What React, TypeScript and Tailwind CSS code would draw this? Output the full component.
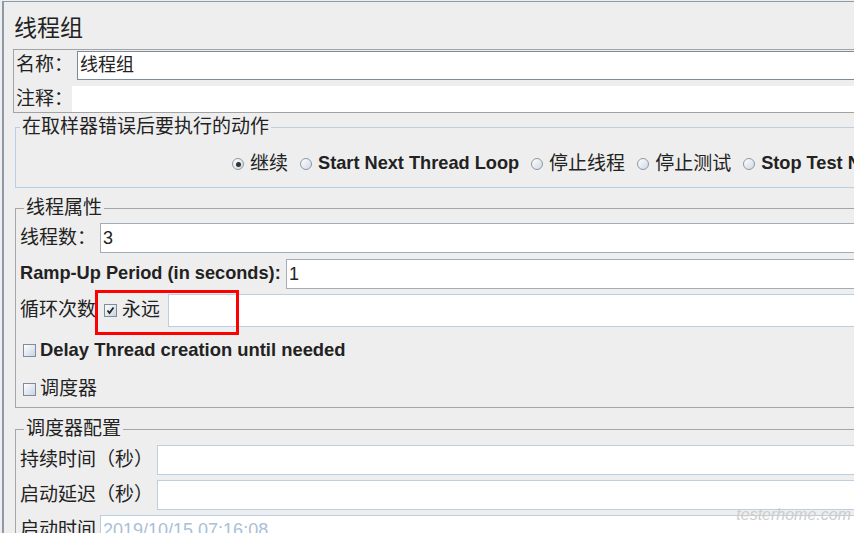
import React from "react";

function Radio({ checked }: { checked?: boolean }) {
  return (
    <span className="w-[12px] h-[12px] rounded-full border border-[#8d99a5] bg-gradient-to-br from-white to-[#cfd8e3] flex items-center justify-center shrink-0">
      {checked && <span className="w-[5px] h-[5px] rounded-full bg-[#333333]" />}
    </span>
  );
}

function Checkbox({ checked }: { checked?: boolean }) {
  return (
    <span className="w-[13px] h-[13px] border border-[#7f8d9b] bg-gradient-to-br from-white to-[#c8d4e3] flex items-center justify-center shrink-0">
      {checked && (
        <svg width="9" height="9" viewBox="0 0 9 9">
          <path d="M1.5 4.5 L3.5 7 L7.5 1.5" stroke="#222" strokeWidth="1.8" fill="none" />
        </svg>
      )}
    </span>
  );
}

export default function App() {
  return (
    <div className="relative h-[533px] w-[854px] overflow-hidden bg-[#eeeeee] pl-[2px] pt-[1px] font-['Liberation_Sans','Noto_Sans_CJK_SC',sans-serif] text-[19px] text-[#222222]">
      <div className="h-full w-[1000px] border-l-2 border-t border-[#8c99a6]">
        {/* title */}
        <div className="pt-[13px] pl-[10px] h-[39px] text-[23px] leading-[26px]">线程组</div>

        {/* name / comment */}
        <div className="mt-[8px] ml-[9px] border border-[#a3a3a3] pl-[2px] pt-[1px]">
          <div className="flex items-center h-[29px]">
            <span className="w-[61px] shrink-0 whitespace-nowrap">名称：</span>
            <div className="flex-1 h-full bg-white border border-[#7c8b99] flex items-center pl-[2px] text-[18px]">线程组</div>
          </div>
          <div className="flex items-center h-[26px] mt-[6px]">
            <span className="w-[56px] shrink-0 whitespace-nowrap">注释：</span>
            <div className="flex-1 h-full bg-white" />
          </div>
        </div>

        {/* on sampler error */}
        <fieldset className="mt-[4px] ml-[11px] border border-[#b8cfe5] pt-[15px] pb-[11px]">
          <legend className="ml-[4px] px-[2px] leading-[20px]">在取样器错误后要执行的动作</legend>
          <div className="flex items-center h-[24px] pl-[216px] gap-[12px] whitespace-nowrap">
            <div className="flex items-center gap-[6px]"><Radio checked /><span>继续</span></div>
            <div className="flex items-center gap-[6px]"><Radio /><span className="font-bold text-[18.2px]">Start Next Thread Loop</span></div>
            <div className="flex items-center gap-[6px]"><Radio /><span>停止线程</span></div>
            <div className="flex items-center gap-[6px]"><Radio /><span>停止测试</span></div>
            <div className="flex items-center gap-[6px]"><Radio /><span className="font-bold text-[18.2px]">Stop Test Now</span></div>
          </div>
        </fieldset>

        {/* thread properties */}
        <fieldset className="mt-[10px] ml-[11px] border border-[#a5a5a5] pl-[4px] pb-[6px]">
          <legend className="ml-[4px] px-[2px] leading-[20px]">线程属性</legend>
          <div className="flex items-center h-[30px] mt-[5px]">
            <span className="w-[80px] shrink-0 whitespace-nowrap">线程数：</span>
            <div className="flex-1 h-full bg-white border border-[#a2adb8] flex items-center pl-[2px] text-[18px]">3</div>
          </div>
          <div className="flex items-center h-[30px] mt-[6px]">
            <span className="w-[266px] shrink-0 font-bold whitespace-nowrap text-[18.2px]">Ramp-Up Period (in seconds):</span>
            <div className="flex-1 h-full bg-white border border-[#a2adb8] flex items-center pl-[2px] text-[18px]">1</div>
          </div>
          <div className="flex items-center h-[33px] mt-[5px]">
            <span className="w-[84px] shrink-0 whitespace-nowrap">循环次数</span>
            <Checkbox checked />
            <span className="ml-[5px]">永远</span>
            <div className="ml-[8px] flex-1 h-full bg-white border border-[#b8cfe5]" />
          </div>
          <div className="flex items-center h-[24px] mt-[11px] pl-[3px] gap-[4px]">
            <Checkbox />
            <span className="font-bold text-[18.4px]">Delay Thread creation until needed</span>
          </div>
          <div className="flex items-center h-[24px] mt-[15px] pl-[3px] gap-[4px]">
            <Checkbox />
            <span>调度器</span>
          </div>
        </fieldset>

        {/* scheduler config */}
        <fieldset className="mt-[11px] ml-[11px] border border-[#a5a5a5] pl-[4px] pb-[6px]">
          <legend className="ml-[4px] px-[2px] leading-[20px]">调度器配置</legend>
          <div className="flex items-center h-[30px] mt-[6px]">
            <span className="w-[137px] shrink-0 whitespace-nowrap">持续时间（秒）</span>
            <div className="flex-1 h-full bg-white border border-[#b8cfe5]" />
          </div>
          <div className="flex items-center h-[30px] mt-[5px]">
            <span className="w-[137px] shrink-0 whitespace-nowrap">启动延迟（秒）</span>
            <div className="flex-1 h-full bg-white border border-[#b8cfe5]" />
          </div>
          <div className="flex items-center h-[30px] mt-[5px]">
            <span className="w-[80px] shrink-0 whitespace-nowrap">启动时间</span>
            <div className="flex-1 h-full bg-white border border-[#b8cfe5] flex items-center pl-[2px] text-[18px] text-[#a9c0d8]">2019/10/15 07:16:08</div>
          </div>
        </fieldset>
      </div>

      {/* annotation box */}
      <div className="absolute left-[95px] top-[290px] w-[144px] h-[45px] border-[3px] border-[#ff0000]" />

      {/* watermark */}
      <div className="absolute right-[3px] top-[505px] text-[16px] leading-[20px] italic text-[#cdcdcd] font-['Liberation_Sans',sans-serif] whitespace-nowrap">
        testerhome.com
      </div>
    </div>
  );
}
